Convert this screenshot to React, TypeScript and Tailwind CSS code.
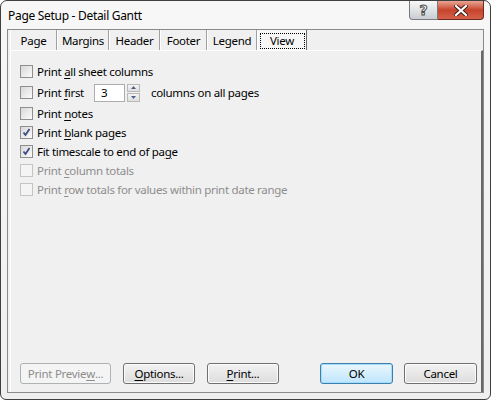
import React from "react";

const font = { fontFamily: '"Noto Sans", "Open Sans", sans-serif' };

function Check({ checked, disabled }: { checked?: boolean; disabled?: boolean }) {
  return (
    <div
      className={
        "w-[13px] h-[13px] border flex items-center justify-center shrink-0 " +
        (disabled ? "border-[#c4c4c4] bg-[#f4f4f4]" : "border-[#8e8f8f] bg-gradient-to-br from-[#d8d8d8] to-[#fbfbfb]")
      }
    >
      {checked && (
        <svg width="9" height="9" viewBox="0 0 9 9">
          <path d="M1.5 4.5 L3.5 7 L7.5 1" fill="none" stroke="#3b4f86" strokeWidth="1.8" />
        </svg>
      )}
    </div>
  );
}

function U({ children }: { children: React.ReactNode }) {
  return <span className="underline underline-offset-[2px]">{children}</span>;
}

function Row({
  checked,
  disabled,
  children,
}: {
  checked?: boolean;
  disabled?: boolean;
  children: React.ReactNode;
}) {
  return (
    <div className="flex items-center h-[19px] gap-[4px]">
      <Check checked={checked} disabled={disabled} />
      <span className={disabled ? "text-[#8d8d8d]" : "text-black"}>{children}</span>
    </div>
  );
}

function Btn({
  children,
  w,
  disabled,
  primary,
}: {
  children: React.ReactNode;
  w: string;
  disabled?: boolean;
  primary?: boolean;
}) {
  let cls = "h-[21px] rounded-[3px] border flex items-center justify-center ";
  if (disabled) cls += "border-[#adb2b5] bg-[#f4f4f4] text-[#8d8d8d] ";
  else if (primary)
    cls += "border-[#3c7fb1] bg-gradient-to-b from-[#eaf6fd] to-[#bee6fd] text-black shadow-[inset_0_0_0_1px_#a6dcf7] ";
  else cls += "border-[#707070] bg-gradient-to-b from-[#f2f2f2] to-[#dddddd] text-black shadow-[inset_0_0_0_1px_#fcfcfc] ";
  return <div className={cls + w}>{children}</div>;
}

export default function App() {
  const tabs = [
    { t: "Page", w: "w-[47px]" },
    { t: "Margins", w: "w-[52px]" },
    { t: "Header", w: "w-[51px]" },
    { t: "Footer", w: "w-[47px]" },
    { t: "Legend", w: "w-[50px]" },
  ];
  return (
    <div className="w-[491px] h-[400px] bg-white text-[11.5px] tracking-[-0.3px]" style={font}>
      <div className="w-[491px] h-[400px] border border-[#3f3f3f] rounded-t-[7px] rounded-b-[6px] bg-gradient-to-b from-[#f7f7f7] to-[#efefef] flex flex-col">
        {/* title bar */}
        <div className="h-[28px] flex items-start relative">
          <div className="pl-[7px] pt-[6px] text-[12px] text-black">Page Setup - Detail Gantt</div>
          <div className="ml-auto mr-[6px] flex">
            <div className="w-[29px] h-[19px] border border-[#7a7a7a] border-t-0 rounded-bl-[4px] bg-gradient-to-b from-[#f8f8f8] to-[#c9ced4] flex items-center justify-center">
              <span
                className="text-[14px] leading-none text-white font-bold [-webkit-text-stroke:1px_#4a4a4a] tracking-normal"
                style={{ fontFamily: '"DejaVu Sans", sans-serif' }}
              >
                ?
              </span>
            </div>
            <div className="w-[46px] h-[19px] border border-[#6d2a22] border-t-0 border-l-0 rounded-br-[4px] bg-gradient-to-b from-[#e8a493] via-[#c7432c] to-[#d4614a] flex items-center justify-center">
              <svg width="14" height="11" viewBox="0 0 14 11">
                <path d="M2 1 L12 10 M12 1 L2 10" stroke="#3a1a14" strokeWidth="4" strokeLinecap="square" />
                <path d="M2 1 L12 10 M12 1 L2 10" stroke="#ffffff" strokeWidth="2.2" strokeLinecap="square" />
              </svg>
            </div>
          </div>
        </div>
        {/* client */}
        <div className="mx-[6px] mb-[6px] flex-1 border border-[#8a8a8a] bg-[#f0f0f0] flex flex-col">
          <div className="pl-[2px] flex flex-col flex-1">
            {/* tabs */}
            <div className="flex h-[20px]">
              {tabs.map((tb) => (
                <div
                  key={tb.t}
                  className={
                    "h-[20px] pt-[2px] border-l border-l-white border-r border-r-[#a0a0a0] flex items-center justify-center text-black " +
                    tb.w
                  }
                >
                  {tb.t}
                </div>
              ))}
              <div className="w-[50px] h-[21px] border-l border-l-white border-r border-r-[#696969] bg-[#f7f7f7] flex items-center justify-center">
                <span className="w-[45px] h-[16px] mt-[1px] border border-dotted border-black flex items-center justify-center">
                  View
                </span>
              </div>
            </div>
            {/* panel */}
            <div className="flex-1 border-t border-t-white border-l border-l-white border-r-2 border-r-[#696969] flex flex-col">
              <div className="pl-[9px] pt-[11px] flex flex-col flex-1">
                <Row>
                  Print <U>a</U>ll sheet columns
                </Row>
                <div className="flex items-center h-[21px] gap-[4px] my-[1px]">
                  <Check />
                  <span>
                    Print <U>f</U>irst
                  </span>
                  <div className="ml-[6px] w-[31px] h-[18px] border border-[#abadb3] bg-white flex items-center pl-[6px]">
                    3
                  </div>
                  <div className="ml-[-2px] w-[13px] h-[18px] flex flex-col gap-[1px]">
                    <div className="flex-1 border border-[#b9b9b9] bg-gradient-to-b from-[#f4f4f4] to-[#dedede] flex items-center justify-center">
                      <svg width="5" height="3" viewBox="0 0 5 3">
                        <path d="M0 3 L2.5 0 L5 3Z" fill="#4d6185" />
                      </svg>
                    </div>
                    <div className="flex-1 border border-[#b9b9b9] bg-gradient-to-b from-[#f4f4f4] to-[#dedede] flex items-center justify-center">
                      <svg width="5" height="3" viewBox="0 0 5 3">
                        <path d="M0 0 L2.5 3 L5 0Z" fill="#4d6185" />
                      </svg>
                    </div>
                  </div>
                  <span className="ml-[7px]">columns on all pages</span>
                </div>
                <Row>
                  Print <U>n</U>otes
                </Row>
                <Row checked>
                  Print <U>b</U>lank pages
                </Row>
                <Row checked>
                  Fit timescale to end of pa<U>g</U>e
                </Row>
                <Row disabled>
                  Print <U>c</U>olumn totals
                </Row>
                <Row disabled>
                  Print <U>r</U>ow totals for values within print date range
                </Row>
              </div>
              {/* buttons */}
              <div className="flex items-center pl-[9px] pr-[4px] pb-[8px]">
                <Btn w="w-[91px]" disabled>
                  Print Previe<U>w</U>...
                </Btn>
                <div className="ml-[12px]">
                  <Btn w="w-[72px]">
                    <U>O</U>ptions...
                  </Btn>
                </div>
                <div className="ml-[12px]">
                  <Btn w="w-[72px]">
                    <U>P</U>rint...
                  </Btn>
                </div>
                <div className="ml-auto">
                  <Btn w="w-[73px]" primary>
                    OK
                  </Btn>
                </div>
                <div className="ml-[11px]">
                  <Btn w="w-[73px]">Cancel</Btn>
                </div>
              </div>
            </div>
          </div>
        </div>
      </div>
    </div>
  );
}
